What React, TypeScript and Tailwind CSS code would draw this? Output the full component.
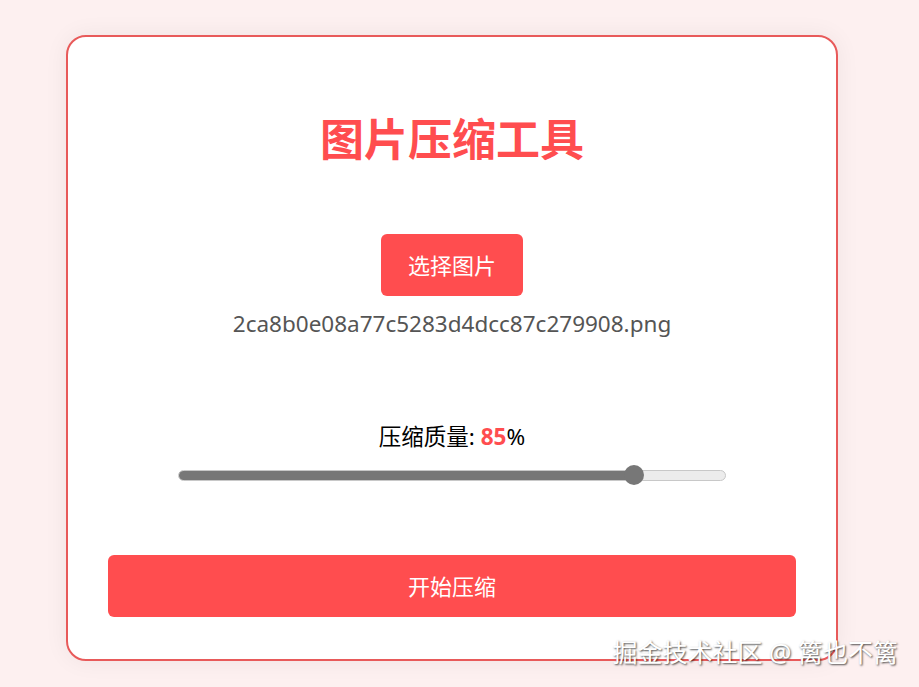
import React from "react";

const font = { fontFamily: '"Noto Sans", "Noto Sans CJK SC", sans-serif' };

export default function App() {
  return (
    <div
      className="relative min-h-[687px] w-full bg-[#fdf0f0] pt-[35px] pl-[66px]"
      style={font}
    >
      {/* Card */}
      <div className="flex w-[772px] flex-col items-center rounded-[20px] border-2 border-[#e85a5a] bg-white px-10 pt-10 pb-[42px] shadow-[0_0_24px_rgba(0,0,0,0.06)]">
        <h1 className="mt-[36px] text-[44px] font-bold leading-[53px] text-[#ff4d4f]">
          图片压缩工具
        </h1>

        <button className="mt-[68px] h-[62px] w-[142px] rounded-md bg-[#ff4d4f] text-[22px] text-white">
          选择图片
        </button>
        <p className="mt-[13px] text-[22.5px] leading-[30px] text-[#555]">
          2ca8b0e08a77c5283d4dcc87c279908.png
        </p>

        <p className="mt-[83px] text-[22.5px] leading-[30px] text-black">
          压缩质量: <span className="font-bold text-[#ff4d4f]">85</span>%
        </p>

        {/* Slider */}
        <div className="relative mt-[13px] flex h-5 w-[548px] items-center">
          <div className="h-[11px] w-full overflow-hidden rounded-full border border-[#c8c8c8] bg-[#ececec]">
            <div className="h-full w-[83.5%] bg-[#777]" />
          </div>
          <div className="absolute left-[446px] top-0 h-5 w-5 rounded-full bg-[#777]" />
        </div>

        <button className="mt-[70px] h-[62px] w-full rounded-md bg-[#ff4d4f] text-[22px] text-white">
          开始压缩
        </button>
      </div>

      {/* Watermark */}
      <div className="absolute right-[21px] top-[634px] text-[25px] leading-[36px] text-white [text-shadow:1px_1px_2px_rgba(0,0,0,0.7)]">
        掘金技术社区 @ 篱也不篱
      </div>
    </div>
  );
}
